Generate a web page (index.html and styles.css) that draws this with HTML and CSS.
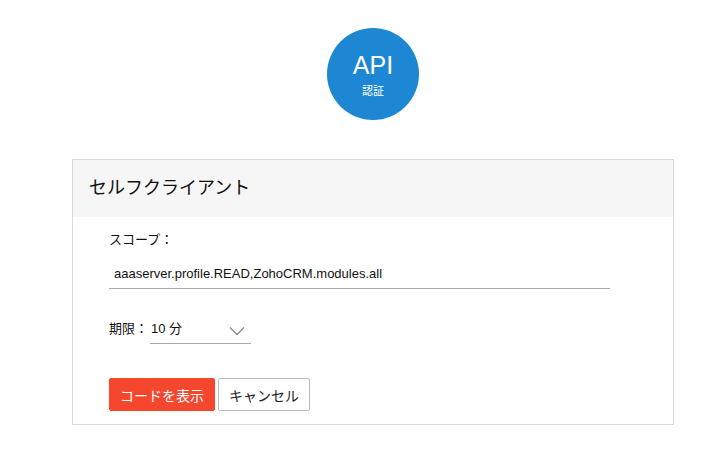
FILE: index.html
```html
<!DOCTYPE html>
<html lang="ja">
<head>
  <meta charset="UTF-8">
  <title>API 認証</title>
  <link rel="stylesheet" href="styles.css">
</head>
<body>
  <div class="badge">
    <span class="badge-title">API</span>
    <span class="badge-sub">認証</span>
  </div>

  <div class="panel">
    <div class="panel-head">セルフクライアント</div>
    <div class="panel-body">
      <div class="label">スコープ：</div>
      <div class="scope">aaaserver.profile.READ,ZohoCRM.modules.all</div>

      <div class="expiry">
        <span>期限：</span>
        <div class="select">
          <span>10 分</span>
          <svg width="16" height="10" viewBox="0 0 16 10"><path d="M1 1.5 L8 8.5 L15 1.5" fill="none" stroke="#888" stroke-width="1.3"/></svg>
        </div>
      </div>

      <div class="actions">
        <button class="btn btn-primary">コードを表示</button>
        <button class="btn">キャンセル</button>
      </div>
    </div>
  </div>
</body>
</html>
```

FILE: styles.css
```css
body {
  margin: 0;
  font-family: "Liberation Sans", Arial, "Noto Sans CJK JP", sans-serif;
  color: #111;
  background: #fff;
}

.badge {
  width: 92px;
  height: 92px;
  border-radius: 50%;
  background-color: #1e87d4;
  color: #fff;
  margin: 28px 0 0 327px;
  display: flex;
  flex-direction: column;
  align-items: center;
  justify-content: center;
}

.badge-title {
  font-size: 25px;
  line-height: 28px;
  margin-top: 0;
}

.badge-sub {
  font-size: 11px;
  margin-top: 3px;
}

.panel {
  width: 600px;
  margin: 39px 0 0 72px;
  border: 1px solid #d9d9d9;
}

.panel-head {
  background-color: #f6f6f6;
  height: 57px;
  line-height: 56px;
  padding-left: 16px;
  font-size: 18px;
}

.panel-body {
  padding: 14px 36px 13px;
  font-size: 13px;
}

.label {
  line-height: 18px;
}

.scope {
  width: 496px;
  margin-top: 15px;
  padding: 0 0 4px 5px;
  border-bottom: 1px solid #aaa;
  font-size: 13px;
  line-height: 20px;
}

.expiry {
  display: flex;
  align-items: flex-start;
  margin-top: 30px;
  line-height: 20px;
}

.expiry > span {
  margin-right: 2px;
}

.select {
  width: 101px;
  display: flex;
  justify-content: space-between;
  align-items: center;
  padding: 0 0 4px 1px;
  border-bottom: 1px solid #aaa;
  box-sizing: border-box;
}

.select svg {
  margin-right: 6px;
  margin-top: 4px;
}

.actions {
  display: flex;
  gap: 3px;
  margin-top: 34px;
}

.btn {
  font-family: inherit;
  font-size: 14px;
  height: 33px;
  padding: 0 10px;
  border: 1px solid #bbb;
  border-radius: 2px;
  background: #fff;
  color: #222;
}

.btn-primary {
  background-color: #f4472e;
  border-color: #f4472e;
  color: #fff;
  width: 106px;
}
```
